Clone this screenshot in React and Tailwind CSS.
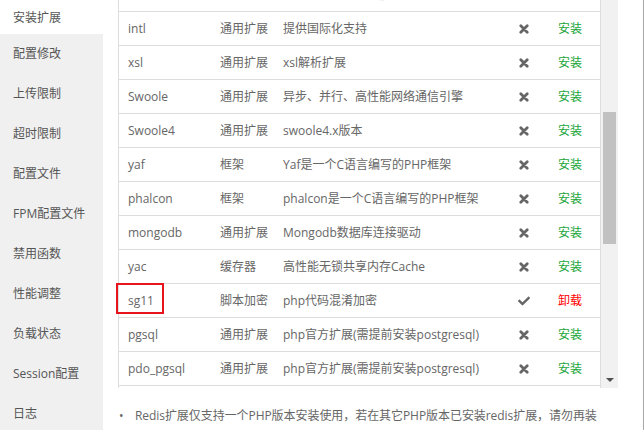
import React from "react";
import { FaCheck } from "react-icons/fa";

const font = { fontFamily: '"Open Sans","Noto Sans CJK SC",sans-serif' };

const menu = [
  "配置修改",
  "上传限制",
  "超时限制",
  "配置文件",
  "FPM配置文件",
  "禁用函数",
  "性能调整",
  "负载状态",
  "Session配置",
  "日志",
];

const rows = [
  ["exif", "通用扩展", "用于读取图片EXIF信息", false],
  ["intl", "通用扩展", "提供国际化支持", false],
  ["xsl", "通用扩展", "xsl解析扩展", false],
  ["Swoole", "通用扩展", "异步、并行、高性能网络通信引擎", false],
  ["Swoole4", "通用扩展", "swoole4.x版本", false],
  ["yaf", "框架", "Yaf是一个C语言编写的PHP框架", false],
  ["phalcon", "框架", "phalcon是一个C语言编写的PHP框架", false],
  ["mongodb", "通用扩展", "Mongodb数据库连接驱动", false],
  ["yac", "缓存器", "高性能无锁共享内存Cache", false],
  ["sg11", "脚本加密", "php代码混淆加密", true],
  ["pgsql", "通用扩展", "php官方扩展(需提前安装postgresql)", false],
  ["pdo_pgsql", "通用扩展", "php官方扩展(需提前安装postgresql)", false],
  ["ioncube", "脚本加密", "用于解密ioncube加密的代码", false],
];

function XIcon() {
  return (
    <svg width="10" height="10" viewBox="0 0 10 10">
      <path d="M1.8 1.8 L8.2 8.2 M8.2 1.8 L1.8 8.2" stroke="#666" strokeWidth="2.8" strokeLinecap="round" />
    </svg>
  );
}

export default function App() {
  return (
    <div
      className="relative w-[644px] h-[430px] flex bg-white overflow-hidden border-r border-[#a8a8a8] text-[12px]"
      style={font}
    >
      <aside className="w-[103px] shrink-0 bg-[#f0f0f0] flex flex-col text-[#555] overflow-hidden">
        <div className="h-[34px] shrink-0 bg-white flex items-center pl-[13px] pt-[2px]">安装扩展</div>
        {menu.map((m) => (
          <div key={m} className="h-[40px] shrink-0 flex items-center pl-[13px]">
            {m}
          </div>
        ))}
      </aside>
      <main className="flex-1 pl-[15px] flex flex-col">
        <div className="flex h-[388px] shrink-0">
          <div className="w-[483px] border-x border-[#ddd] overflow-hidden">
            <div className="mt-[-22px] text-[#666]">
              {rows.map(([n, t, d, inst]) => (
                <div key={n} className="h-[34px] border-b border-[#ddd] flex items-center pt-[1px]">
                  <div className="w-[91px] pl-[9px] whitespace-nowrap">{n}</div>
                  <div className="w-[63px] pl-[10px] whitespace-nowrap">{t}</div>
                  <div className="w-[230px] pl-[10px] whitespace-nowrap overflow-hidden">{d}</div>
                  <div className="w-[42px] flex justify-center text-[#666]">
                    {inst ? <FaCheck size={12} /> : <XIcon />}
                  </div>
                  <div className={"w-[55px] pl-[13px] " + (inst ? "text-[#ff0000]" : "text-[#20a53a]")}>
                    {inst ? "卸载" : "安装"}
                  </div>
                </div>
              ))}
            </div>
          </div>
          <div className="w-[17px] bg-[#f1f1f1] flex flex-col">
            <div className="h-[112px] shrink-0" />
            <div className="h-[132px] ml-[2px] w-[13px] bg-[#c1c1c1] shrink-0" />
            <div className="flex-1" />
            <div className="h-[17px] flex items-center justify-center">
              <svg width="8" height="4" viewBox="0 0 8 4">
                <path d="M0 0 L8 0 L4 4 Z" fill="#505050" />
              </svg>
            </div>
          </div>
        </div>
        <ul className="mt-[18px] text-[#666] text-[12px]">
          <li className="flex leading-[20px] whitespace-nowrap">
            <span className="w-[17px] pl-[1px] shrink-0">•</span>
            <span className="tracking-[-0.06px]">Redis扩展仅支持一个PHP版本安装使用，若在其它PHP版本已安装redis扩展，请勿再装</span>
          </li>
        </ul>
      </main>
      <div className="absolute left-[116px] top-[283px] w-[48px] h-[31px] border-2 border-[#e8141c]" />
    </div>
  );
}
